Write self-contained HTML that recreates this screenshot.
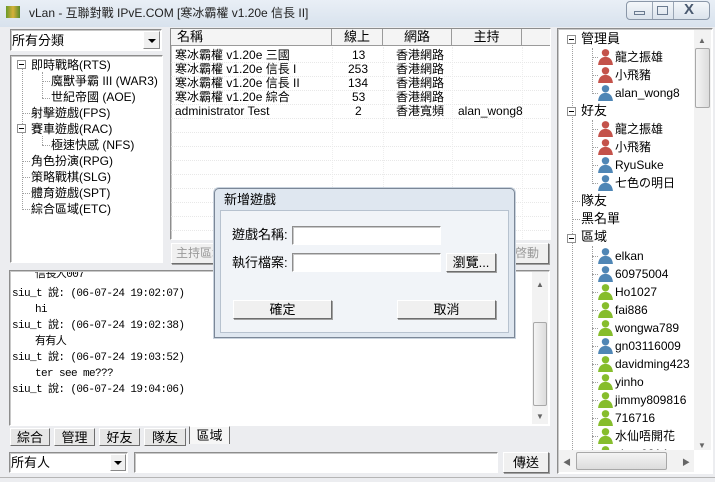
<!DOCTYPE html>
<html><head><meta charset="utf-8"><style>
*{margin:0;padding:0;box-sizing:border-box}
body{width:715px;height:482px;overflow:hidden;background:#ecedf0;font-family:"Liberation Sans","Noto Sans CJK TC",sans-serif;font-size:12px;color:#000;position:relative}
.a{position:absolute}
.sunk{border:1px solid #8d8d8d;border-right-color:#fff;border-bottom-color:#fff;box-shadow:inset 1px 1px 0 #c8c8c8}
.btn{position:absolute;background:#f0f0f0;border:1px solid #fff;border-right-color:#6e6e6e;border-bottom-color:#6e6e6e;box-shadow:1px 1px 0 #a0a0a0;text-align:center;line-height:17px;font-size:12px}
.t{position:absolute;white-space:nowrap;line-height:16px}
.hd{position:absolute;top:0;height:17px;border-right:1px solid #9a9a9a;border-bottom:1px solid #9a9a9a;background:#f4f4f4;text-align:center;line-height:16px;font-size:13px}
.row{position:absolute;left:0;width:378px;height:14px;line-height:13px;font-size:12px;border-bottom:1px dotted #e8e8e8}
.row span{position:absolute;white-space:nowrap}
.dl{position:absolute;border-left:1px dotted #a0a0a0}
.dh{position:absolute;border-top:1px dotted #a0a0a0}
.box{position:absolute;width:9px;height:9px;border:1px solid #909090;background:#fff}
.box:after{content:"";position:absolute;left:1px;top:3px;width:5px;height:1px;background:#000}
.chat{font-family:"Liberation Mono","Noto Sans CJK TC",monospace;font-size:11px;letter-spacing:-0.6px}
.tab{position:absolute;top:428px;height:18px;background:#e6e6e6;border:1px solid #fff;border-right-color:#6e6e6e;border-bottom-color:#6e6e6e;text-align:center;line-height:17px;font-size:13px}
.tr{font-size:12px}
</style></head><body>
<div class="a" style="left:0;top:0;width:715px;height:27px;background:linear-gradient(#e9eff6,#d8e2ed)"></div>
<div class="a" style="left:6px;top:6px;width:14px;height:12px;background:linear-gradient(90deg,#6a9a2a,#d6b13a,#5a8a2a)"></div>
<div class="t" style="left:29px;top:5px;font-size:12px;color:#222">vLan - 互聯對戰 IPvE.COM [寒冰霸權 v1.20e 信長 II]</div>
<div class="a" style="left:626px;top:1px;width:84px;height:19px;border:1px solid #8a97a8;border-radius:4px;background:linear-gradient(#f4f7fa,#dbe3ec)"></div>
<div class="a" style="left:652px;top:2px;width:1px;height:17px;background:#9aa6b5"></div>
<div class="a" style="left:673px;top:2px;width:1px;height:17px;background:#9aa6b5"></div>
<div class="a" style="left:634px;top:11px;width:11px;height:4px;border:1px solid #6b7b90"></div>
<div class="a" style="left:657px;top:6px;width:11px;height:9px;border:1px solid #6b7b90"></div>
<div class="t" style="left:684px;top:2px;font-size:15px;color:#4a5a70;font-weight:bold">X</div>

<div class="a sunk" style="left:10px;top:29px;width:152px;height:22px;background:#fff"></div>
<div class="t" style="left:12px;top:33px;font-size:13px">所有分類</div>
<div class="a" style="left:143px;top:31px;width:17px;height:18px;background:#f0f0f0;border:1px solid #fff;border-right-color:#888;border-bottom-color:#888"></div>
<div class="a" style="left:148px;top:39px;border:4px solid transparent;border-top:4px solid #000;border-bottom:0"></div>

<div class="a sunk" style="left:10px;top:55px;width:153px;height:208px;background:#fff"></div>
<div class="dl" style="left:22px;top:60px;height:150px"></div>
<div class="dl" style="left:42px;top:72px;height:26px"></div>
<div class="dl" style="left:42px;top:136px;height:9px"></div>
<div class="box" style="left:17px;top:60px"></div>
<div class="box" style="left:17px;top:124px"></div>
<div class="dh" style="left:42px;top:81px;width:8px"></div>
<div class="dh" style="left:42px;top:98px;width:8px"></div>
<div class="dh" style="left:42px;top:145px;width:8px"></div>
<div class="dh" style="left:22px;top:113px;width:8px"></div>
<div class="dh" style="left:22px;top:161px;width:8px"></div>
<div class="dh" style="left:22px;top:177px;width:8px"></div>
<div class="dh" style="left:22px;top:193px;width:8px"></div>
<div class="dh" style="left:22px;top:209px;width:8px"></div>
<div class="t tr" style="left:31px;top:57px">即時戰略(RTS)</div>
<div class="t tr" style="left:51px;top:73px">魔獸爭霸 III (WAR3)</div>
<div class="t tr" style="left:51px;top:89px">世紀帝國 (AOE)</div>
<div class="t tr" style="left:31px;top:105px">射擊遊戲(FPS)</div>
<div class="t tr" style="left:31px;top:121px">賽車遊戲(RAC)</div>
<div class="t tr" style="left:51px;top:137px">極速快感 (NFS)</div>
<div class="t tr" style="left:31px;top:153px">角色扮演(RPG)</div>
<div class="t tr" style="left:31px;top:169px">策略戰棋(SLG)</div>
<div class="t tr" style="left:31px;top:185px">體育遊戲(SPT)</div>
<div class="t tr" style="left:31px;top:201px">綜合區域(ETC)</div>

<div class="a sunk" style="left:170px;top:28px;width:381px;height:212px;background:#fff;overflow:hidden">
 <div class="hd" style="left:0;width:161px;text-align:left;padding-left:6px">名稱</div>
 <div class="hd" style="left:161px;width:51px">線上</div>
 <div class="hd" style="left:212px;width:69px">網路</div>
 <div class="hd" style="left:281px;width:70px">主持</div>
 <div class="hd" style="left:351px;width:30px;border-right:0"></div>
 <div class="a" style="left:161px;top:18px;height:200px;border-left:1px dotted #eee"></div>
 <div class="a" style="left:212px;top:18px;height:200px;border-left:1px dotted #eee"></div>
 <div class="a" style="left:281px;top:18px;height:200px;border-left:1px dotted #eee"></div>
 <div class="a" style="left:351px;top:18px;height:200px;border-left:1px dotted #eee"></div>
 <div class="row" style="top:20px"><span style="left:4px">寒冰霸權 v1.20e 三國</span><span style="left:181px">13</span><span style="left:225px">香港網路</span></div>
 <div class="row" style="top:34px"><span style="left:4px">寒冰霸權 v1.20e 信長 I</span><span style="left:177px">253</span><span style="left:225px">香港網路</span></div>
 <div class="row" style="top:48px"><span style="left:4px">寒冰霸權 v1.20e 信長 II</span><span style="left:177px">134</span><span style="left:225px">香港網路</span></div>
 <div class="row" style="top:62px"><span style="left:4px">寒冰霸權 v1.20e 綜合</span><span style="left:181px">53</span><span style="left:225px">香港網路</span></div>
 <div class="row" style="top:76px"><span style="left:4px">administrator Test</span><span style="left:184px">2</span><span style="left:225px">香港寬頻</span><span style="left:287px">alan_wong8</span></div>
 <div class="row" style="top:90px"></div><div class="row" style="top:104px"></div><div class="row" style="top:118px"></div><div class="row" style="top:132px"></div><div class="row" style="top:146px"></div><div class="row" style="top:160px"></div><div class="row" style="top:174px"></div><div class="row" style="top:188px"></div>
</div>
<div class="btn" style="left:171px;top:243px;width:60px;height:21px;color:#999;text-align:left;padding-left:4px;line-height:19px">主持區域</div>
<div class="btn" style="left:505px;top:243px;width:44px;height:21px;color:#999;line-height:19px">啓動</div>

<div class="a sunk" style="left:9px;top:270px;width:541px;height:156px;background:#fff"></div>
<div class="a" style="left:532px;top:272px;width:16px;height:152px;background:#f2f2f2"></div>
<div class="a" style="left:533px;top:322px;width:14px;height:84px;background:linear-gradient(90deg,#f4f4f4,#dcdcdc);border:1px solid #a8a8a8;border-radius:2px"></div>
<div class="t" style="left:536px;top:277px;font-size:8px;color:#666">▲</div>
<div class="t" style="left:536px;top:409px;font-size:8px;color:#666">▼</div>
<div class="a" style="left:11px;top:272px;width:520px;height:152px;overflow:hidden">
<div class="t chat" style="left:24px;top:-5px">信長人007</div>
<div class="t chat" style="left:1px;top:14px">siu_t 說: (06-07-24 19:02:07)</div>
<div class="t chat" style="left:24px;top:30px">hi</div>
<div class="t chat" style="left:1px;top:46px">siu_t 說: (06-07-24 19:02:38)</div>
<div class="t chat" style="left:24px;top:62px">有有人</div>
<div class="t chat" style="left:1px;top:78px">siu_t 說: (06-07-24 19:03:52)</div>
<div class="t chat" style="left:24px;top:94px">ter see me???</div>
<div class="t chat" style="left:1px;top:110px">siu_t 說: (06-07-24 19:04:06)</div>
</div>

<div class="tab" style="left:10px;width:40px">綜合</div>
<div class="tab" style="left:54px;width:41px">管理</div>
<div class="tab" style="left:99px;width:41px">好友</div>
<div class="tab" style="left:144px;width:42px">隊友</div>
<div class="tab" style="left:189px;top:426px;width:41px;background:#f6f6f6;border-left-color:#6e6e6e;border-bottom:0">區域</div>

<div class="a sunk" style="left:9px;top:452px;width:119px;height:21px;background:#fff"></div>
<div class="t" style="left:11px;top:455px;font-size:13px">所有人</div>
<div class="a" style="left:110px;top:454px;width:16px;height:17px;background:#f0f0f0;border:1px solid #fff;border-right-color:#888;border-bottom-color:#888"></div>
<div class="a" style="left:114px;top:461px;border:4px solid transparent;border-top:4px solid #000;border-bottom:0"></div>
<div class="a sunk" style="left:134px;top:452px;width:364px;height:21px;background:#fff"></div>
<div class="btn" style="left:503px;top:452px;width:46px;height:21px;line-height:19px;font-size:13px">傳送</div>

<div class="a sunk" style="left:557px;top:28px;width:156px;height:446px;background:#fff"></div>
<div class="a" style="left:694px;top:30px;width:17px;height:420px;background:#f2f2f2"></div>
<div class="a" style="left:695px;top:48px;width:15px;height:60px;background:linear-gradient(90deg,#f4f4f4,#dcdcdc);border:1px solid #a8a8a8;border-radius:2px"></div>
<div class="t" style="left:698px;top:33px;font-size:8px;color:#666">▲</div>
<div class="t" style="left:698px;top:438px;font-size:8px;color:#666">▼</div>
<div class="a" style="left:559px;top:450px;width:135px;height:22px;background:#f2f2f2"></div>
<div class="a" style="left:576px;top:452px;width:91px;height:18px;background:linear-gradient(#f4f4f4,#dcdcdc);border:1px solid #a8a8a8;border-radius:2px"></div>
<div class="t" style="left:563px;top:455px;font-size:8px;color:#666">◀</div>
<div class="t" style="left:682px;top:455px;font-size:8px;color:#666">▶</div>
<div class="a" style="left:559px;top:30px;width:135px;height:420px;overflow:hidden">
<div class="dl" style="left:13px;top:10px;height:410px"></div>
<div class="box" style="left:8px;top:5px"></div>
<div class="box" style="left:8px;top:77px"></div>
<div class="box" style="left:8px;top:204px"></div>
<div class="dl" style="left:33px;top:18px;height:44px"></div>
<div class="dl" style="left:33px;top:90px;height:62px"></div>
<div class="dl" style="left:33px;top:216px;height:210px"></div>
<div class="dh" style="left:13px;top:171px;width:8px"></div>
<div class="dh" style="left:13px;top:189px;width:8px"></div>
<div class="t" style="left:22px;top:1px;font-size:13px">管理員</div>
<div class="t" style="left:22px;top:73px;font-size:13px">好友</div>
<div class="t" style="left:22px;top:163px;font-size:13px">隊友</div>
<div class="t" style="left:22px;top:181px;font-size:13px">黑名單</div>
<div class="t" style="left:22px;top:199px;font-size:13px">區域</div>
<div id="users"></div>
</div>
<div class="a" style="left:0;top:477px;width:715px;height:1px;background:#b5b5b5"></div>

<div class="a" style="left:214px;top:188px;width:301px;height:150px;border:1px solid #7b8797;border-radius:5px 5px 0 0;background:#dfe7f0;box-shadow:0 0 0 1px #c9d3de"></div>
<div class="t" style="left:224px;top:192px;font-size:13px">新增遊戲</div>
<div class="a" style="left:220px;top:210px;width:289px;height:123px;background:#f1f4f8;border:1px solid #b7c2cf"></div>
<div class="t" style="left:232px;top:227px;font-size:13px">遊戲名稱:</div>
<div class="t" style="left:232px;top:255px;font-size:13px">執行檔案:</div>
<div class="a sunk" style="left:292px;top:226px;width:149px;height:19px;background:#fff"></div>
<div class="a sunk" style="left:292px;top:253px;width:149px;height:19px;background:#fff"></div>
<div class="btn" style="left:446px;top:253px;width:50px;height:19px;font-size:13px;line-height:17px">瀏覽...</div>
<div class="btn" style="left:233px;top:300px;width:99px;height:19px;font-size:13px">確定</div>
<div class="btn" style="left:397px;top:300px;width:99px;height:19px;font-size:13px">取消</div>

<script>
var R='#c4524a',B='#4f86b5',G='#86bd2c';
var u=[[18,R,'龍之振雄'],[36,R,'小飛豬'],[54,B,'alan_wong8'],[90,R,'龍之振雄'],[108,R,'小飛豬'],[126,B,'RyuSuke'],[144,B,'七色の明日'],
[217,B,'elkan'],[235,B,'60975004'],[253,G,'Ho1027'],[271,G,'fai886'],[289,G,'wongwa789'],[307,B,'gn03116009'],[325,G,'davidming423'],[343,G,'yinho'],[361,G,'jimmy809816'],[379,G,'716716'],[397,G,'水仙唔開花'],[415,G,'chun0214']];
var h='';
u.forEach(function(x){var y=x[0];
h+='<div class="dh" style="left:33px;top:'+(y+9)+'px;width:6px"></div>';
h+='<svg class="a" style="left:38px;top:'+(y)+'px" width="17" height="17" viewBox="0 0 16 16"><circle cx="8" cy="4.5" r="3.5" fill="'+x[1]+'"/><path d="M1 16 C1.5 10 5 8.3 8 8.3 C11 8.3 14.5 10 15 16 Z" fill="'+x[1]+'"/></svg>';
h+='<div class="t" style="left:56px;top:'+(y+1)+'px;font-size:12px">'+x[2]+'</div>';});
document.getElementById('users').innerHTML=h;
</script>
</body></html>
